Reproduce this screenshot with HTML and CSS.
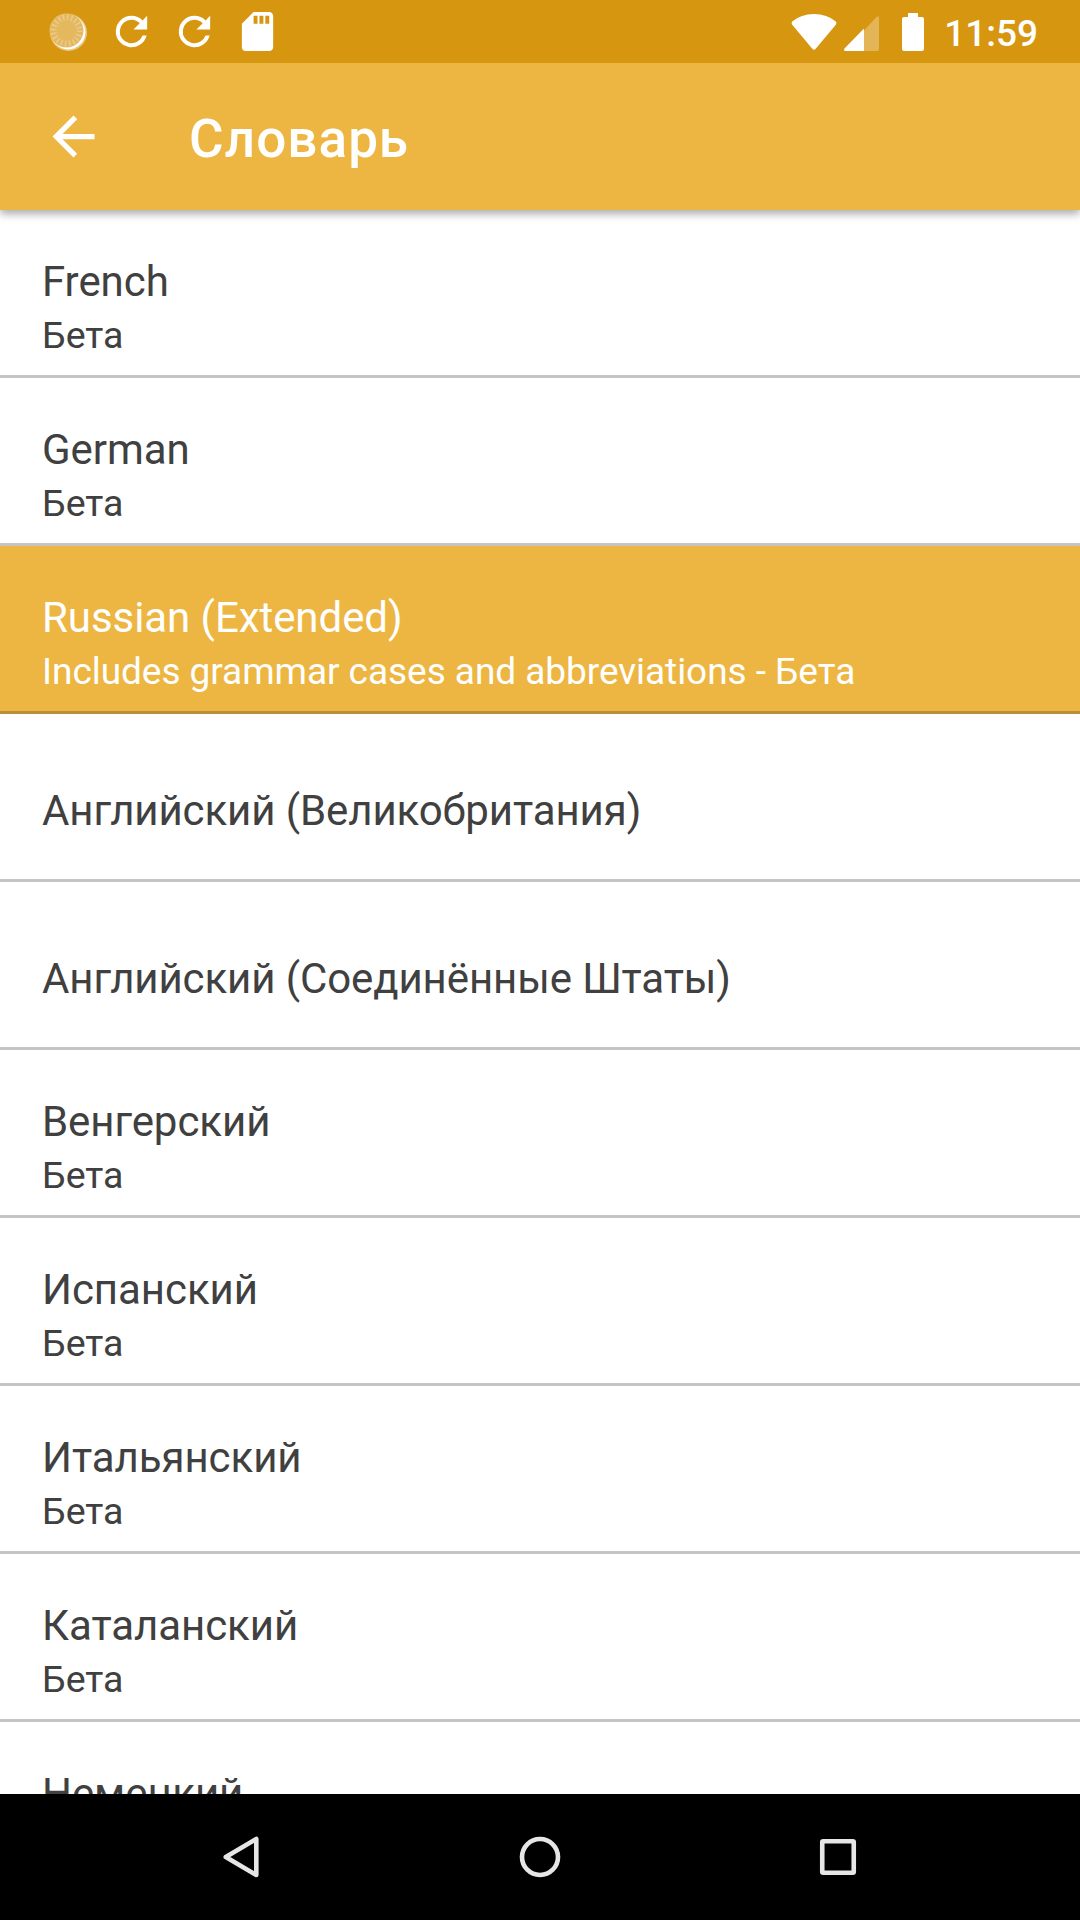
FILE: index.html
```html
<!DOCTYPE html>
<html lang="ru"><head><meta charset="utf-8"><title>Словарь</title><link rel="stylesheet" href="styles.css"></head>
<body>
<div class="screen">
<div class="status">
<div class="status-left">
<svg width="40" height="40" viewBox="0 0 40 40"><circle cx="20.500" cy="20.500" r="18.500" fill="#ebc984"/><circle cx="20.200" cy="20.200" r="17.200" fill="#fff"/><circle cx="18.500" cy="18.500" r="17" fill="#e6c27a"/><circle cx="18.500" cy="18.500" r="16.500" fill="#e4b85f"/><circle cx="18.500" cy="18.500" r="13" fill="none" stroke="#ebcb8c" stroke-width="6" stroke-dasharray="1.500 2.584"/></svg>
<svg class="refresh" width="47" height="47" viewBox="0 0 24 24"><path fill="#fff" d="M17.65 6.35A7.96 7.96 0 0 0 12 4a8 8 0 1 0 7.73 10h-2.08A6 6 0 1 1 12 6c1.66 0 3.14.69 4.22 1.78L13 11h7V4z"/></svg>
<svg class="refresh" width="47" height="47" viewBox="0 0 24 24"><path fill="#fff" d="M17.65 6.35A7.96 7.96 0 0 0 12 4a8 8 0 1 0 7.73 10h-2.08A6 6 0 1 1 12 6c1.66 0 3.14.69 4.22 1.78L13 11h7V4z"/></svg>
<svg class="sd" width="47" height="47" viewBox="0 0 24 24"><path fill="#fff" d="M18 2h-8L4.02 8 4 20c0 1.100.9 2 2 2h12c1.100 0 2-.9 2-2V4c0-1.100-.9-2-2-2zm-6 6h-2V4h2v4zm3 0h-2V4h2v4zm3 0h-2V4h2v4z"/></svg>
</div>
<div class="status-right">
<svg class="wifi" width="46" height="38" viewBox="0 0 46 38"><path fill="#fff" d="M1.200 8.500Q10 1 23 1T44.800 8.500Q46 10 45 11.500L24.500 36Q23 37.500 21.500 36L1 11.500Q0 10 1.200 8.500z"/></svg>
<svg class="signal" width="35" height="36" viewBox="0 0 35 36"><path fill="#fff" fill-opacity=".3" d="M20 15.500L32.500 2Q35 0 35 3v31q0 2-2 2H20z"/><path fill="#fff" d="M20 13.500V36H2q-3 0-1.500-2.500z"/></svg>
<svg class="battery" width="22" height="38" viewBox="0 0 22 38"><path fill="#fff" d="M6 0h10v4h4q2 0 2 2v30q0 2-2 2H2q-2 0-2-2V6q0-2 2-2h4z"/></svg>
<span class="clock">11:59</span>
</div></div>
<header class="bar"><svg class="back" width="63" height="63" viewBox="0 0 24 24"><path fill="#fff" d="M20 11H7.830l5.590-5.590L12 4l-8 8 8 8 1.410-1.410L7.830 13H20z"/></svg><h1>Словарь</h1></header>
<main class="list">
<div class="row"><div class="name">French</div><div class="sub">Бета</div></div>
<div class="row"><div class="name">German</div><div class="sub">Бета</div></div>
<div class="row selected"><div class="name">Russian (Extended)</div><div class="sub">Includes grammar cases and abbreviations - Бета</div></div>
<div class="row single"><div class="name">Английский (Великобритания)</div></div>
<div class="row single"><div class="name">Английский (Соединённые Штаты)</div></div>
<div class="row"><div class="name">Венгерский</div><div class="sub">Бета</div></div>
<div class="row"><div class="name">Испанский</div><div class="sub">Бета</div></div>
<div class="row"><div class="name">Итальянский</div><div class="sub">Бета</div></div>
<div class="row"><div class="name">Каталанский</div><div class="sub">Бета</div></div>
<div class="row"><div class="name">Немецкий</div></div>
</main>
<nav class="nav">
<svg width="60" height="60" viewBox="0 0 60 60"><path d="M44.300 12v36L13.800 30z"/></svg>
<svg width="60" height="60" viewBox="0 0 60 60"><circle cx="30" cy="30" r="18"/></svg>
<svg width="60" height="60" viewBox="0 0 60 60"><rect x="14.250" y="14.250" width="31.500" height="31.500" rx="1"/></svg>
</nav>
</div></body></html>
```
FILE: styles.css
```css
*{box-sizing:border-box}
body{margin:0;font-family:Roboto,sans-serif;background:#fff}
svg{display:block;flex:none}
.screen{width:1080px;height:1920px;display:flex;flex-direction:column;overflow:hidden}
.status{height:63px;flex:none;background:#d7960f;display:flex;justify-content:space-between;align-items:center;padding:0 42px 0 48px;position:relative;z-index:2}
.status-left,.status-right{display:flex;align-items:center}
.refresh{margin-left:16px}
.refresh:nth-child(2){margin-left:20px}
.sd{margin-left:16px}
.signal{margin-left:7px;margin-top:2px}
.battery{margin-left:23px}
.clock{margin:3px 0 0 20px;color:#fff;font-weight:500;font-size:37px}
.bar{height:147px;flex:none;background:#edb642;display:flex;align-items:center;padding-left:42px;box-shadow:0 4px 8px rgba(0,0,0,.33);z-index:1}
h1{margin:4px 0 0 84px;color:#fff;font-weight:500;font-size:53px;letter-spacing:1.1px}
.list{flex:1;min-height:0;overflow:hidden}
.row{height:168px;border-bottom:3px solid #c4c4c4;padding:47px 42px 0;color:#404040}
.name{font-size:42px;line-height:50px;letter-spacing:-.06px}
.sub{font-size:37.5px;line-height:44px;margin-top:6px}
.selected{background:#edb642;color:#fff;border-color:#b98f38}
.selected .sub{font-size:37px;letter-spacing:-.05px;margin-top:7px}
.single{padding-top:72px}
.single .name{letter-spacing:-.1px}
.nav{height:126px;flex:none;background:#000;display:flex;justify-content:space-between;padding:33px 212px}
.nav svg{fill:none;stroke:#e6e6e6;stroke-width:4.6;stroke-linejoin:round}
```
